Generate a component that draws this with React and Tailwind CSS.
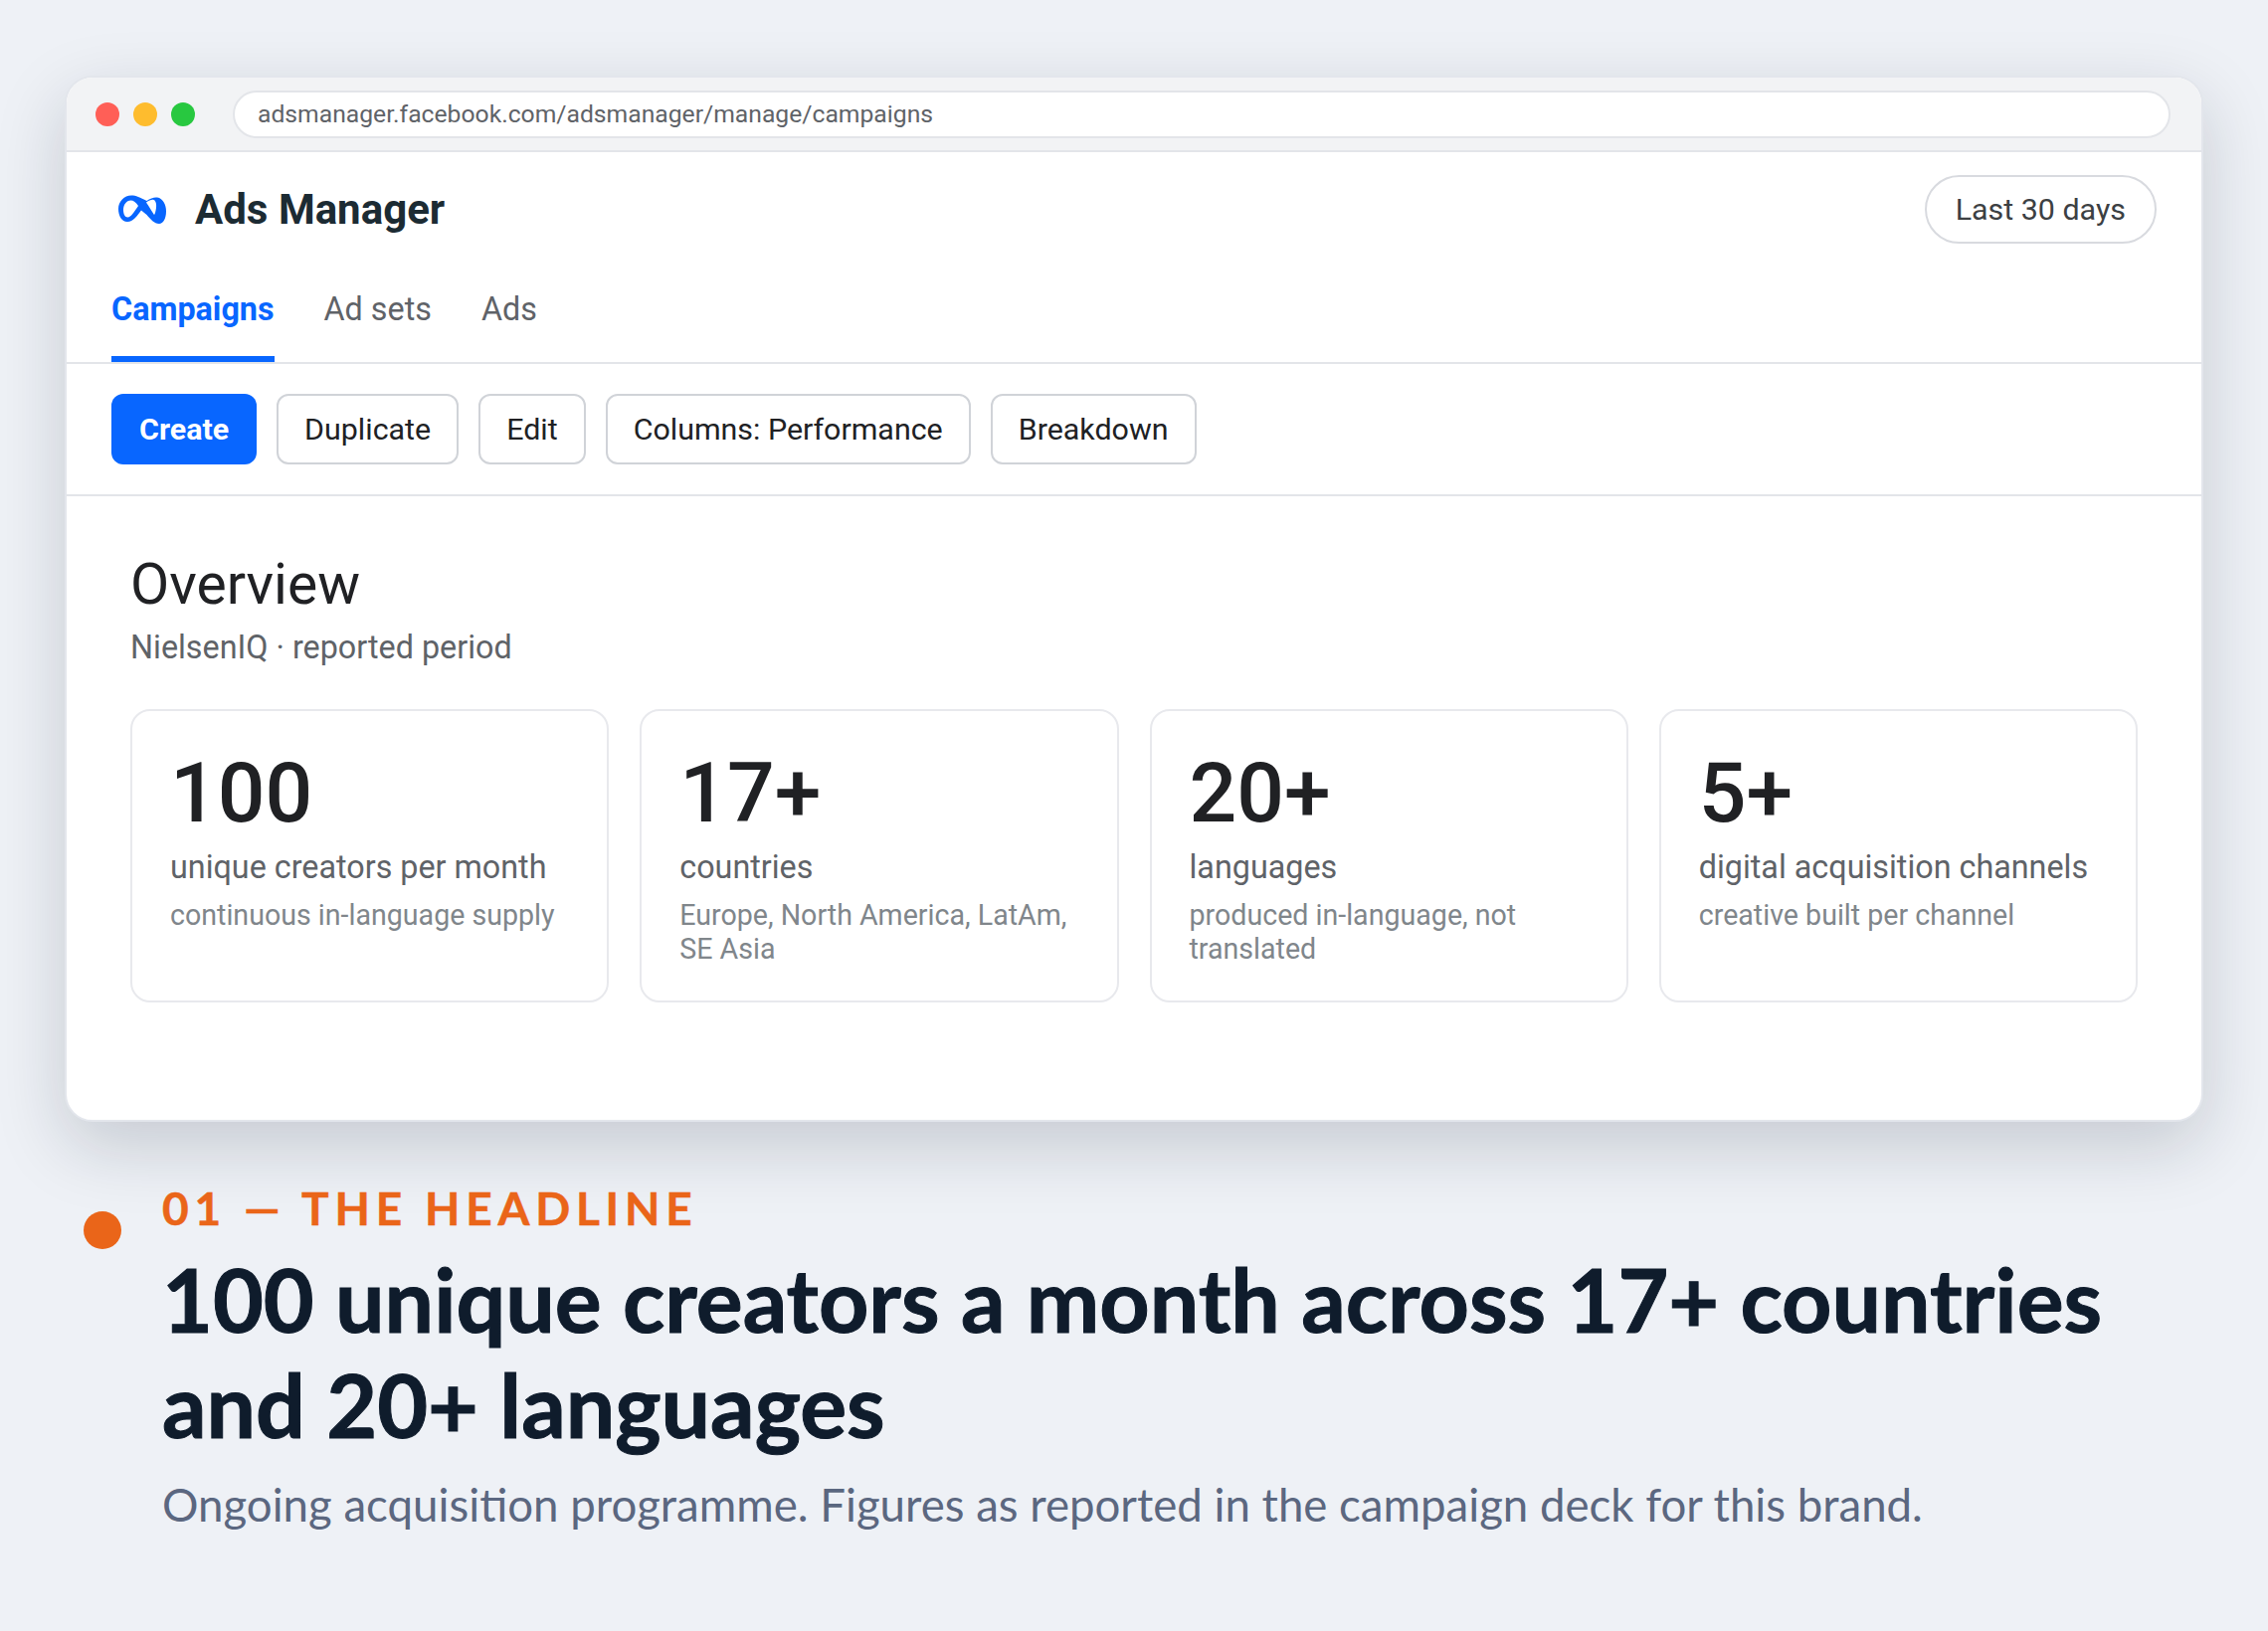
const cards = [
  { n: "100", l: "unique creators per month", s: "continuous in-language supply" },
  { n: "17+", l: "countries", s: "Europe, North America, LatAm, SE Asia" },
  { n: "20+", l: "languages", s: "produced in-language, not translated" },
  { n: "5+", l: "digital acquisition channels", s: "creative built per channel" },
];

function MetaLogo() {
  return (
    <svg width="48" height="30" viewBox="0 0 48 30" className="block">
      <path
        fill="#0866ff"
        fillRule="evenodd"
        d="M13 .5C17.5 .5 22 2.5 28.5 6C32 3.5 36 2 39 2.5C45 3.5 48 10 48 16.5C48 24 45 29 41 29C36 29 32.5 24.5 28.5 20L23 15.5C19 21 15 27 9 27C3.5 27 0 21 0 14C0 6.5 6 .5 13 .5ZM12.5 5.5C8 5.5 5 10 5 15C5 19 6.5 22.5 9.5 22.5C12.5 22.5 16 17 20 11C18 7.5 15 5.5 12.5 5.5ZM28 7.5C31 5.5 33.5 4.5 35.5 5C37.5 5.5 38.5 9 38 13C37.5 16 37 19 36 20C34 17 30.5 11 28 7.5Z"
      />
    </svg>
  );
}

function Btn({ children }) {
  return (
    <div className="h-[71px] flex items-center px-[26px] rounded-[12px] border-2 border-[#d0d3d8] bg-white text-[30.4px] text-[#202124]">
      {children}
    </div>
  );
}

export default function App() {
  return (
    <div className="w-[2280px] h-[1640px] bg-[#eef1f6] pt-[76px] px-[65px] font-[Roboto,sans-serif]">
      <div className="h-[1052px] rounded-[28px] border-2 border-[#e3e6ec] bg-white overflow-hidden shadow-[0_24px_70px_rgba(15,28,46,0.18)]">
        <div className="h-[75px] bg-[#f2f3f5] border-b-2 border-[#e3e5e9] flex items-center pl-[29px] pr-[31px]">
          <div className="flex gap-[14px]">
            <div className="w-[24px] h-[24px] rounded-full bg-[#ff5f57]" />
            <div className="w-[24px] h-[24px] rounded-full bg-[#febc2e]" />
            <div className="w-[24px] h-[24px] rounded-full bg-[#28c840]" />
          </div>
          <div className="ml-[38px] flex-1 h-[48px] rounded-full border-2 border-[#e3e5e9] bg-white flex items-center pl-[23px] text-[24.7px] text-[#5f6368]">
            adsmanager.facebook.com/adsmanager/manage/campaigns
          </div>
        </div>
        <div className="h-[213px] border-b-2 border-[#e3e5e9] flex flex-col">
          <div className="h-[116px] pl-[52px] pr-[45px] pt-[23px] flex items-start justify-between">
            <div className="flex items-center h-[69px] gap-[29px]">
              <MetaLogo />
              <span className="text-[42px] font-bold text-[#1c2b33]">Ads Manager</span>
            </div>
            <div className="h-[69px] flex items-center px-[29px] rounded-full border-2 border-[#d8dadf] text-[30.4px] text-[#3c4043]">Last 30 days</div>
          </div>
          <div className="flex-1 flex gap-[50px] pl-[45px] text-[32.3px] text-[#5f6368]">
            <div className="h-[95px] flex items-center pb-[5px] text-[#0866ff] font-bold border-b-[6px] border-[#0866ff]">Campaigns</div>
            <div className="h-[95px] flex items-center pb-[11px]">Ad sets</div>
            <div className="h-[95px] flex items-center pb-[11px]">Ads</div>
          </div>
        </div>
        <div className="h-[133px] border-b-2 border-[#e3e5e9] flex items-center gap-[20px] pl-[45px]">
          <div className="h-[71px] flex items-center px-[28px] rounded-[12px] bg-[#0866ff] text-white font-bold text-[30.4px]">Create</div>
          <Btn>Duplicate</Btn>
          <Btn>Edit</Btn>
          <Btn>Columns: Performance</Btn>
          <Btn>Breakdown</Btn>
        </div>
        <div className="px-[64px] pt-[55px]">
          <div className="text-[57px] leading-[68px] text-[#202124]">Overview</div>
          <div className="mt-[9px] text-[32.3px] leading-[40px] text-[#5f6368]">NielsenIQ · reported period</div>
          <div className="mt-[42px] grid grid-cols-4 gap-[31px]">
            {cards.map((c) => (
              <div key={c.n} className="h-[295px] rounded-[20px] border-2 border-[#e8e9ed] px-[38px] pt-[34px]">
                <div className="text-[84px] leading-[98px] font-medium text-[#202124]">{c.n}</div>
                <div className="mt-[5px] text-[32.3px] leading-[40px] text-[#5f6368]">{c.l}</div>
                <div className="mt-[11px] text-[28.6px] leading-[34px] text-[#80868b]">{c.s}</div>
              </div>
            ))}
          </div>
        </div>
      </div>
      <div className="relative pl-[98px] font-[Lato,sans-serif]">
        <div className="absolute left-[19px] top-[90px] w-[38px] h-[38px] rounded-full bg-[#ea6519]" />
        <div className="pt-[59px] text-[46px] leading-[56px] font-bold tracking-[5.8px] text-[#ea6519] [-webkit-text-stroke:0.5px_#ea6519]">01 — THE HEADLINE</div>
        <div className="mt-[10px] text-[87.8px] leading-[106px] font-bold text-[#0f1c2c] [-webkit-text-stroke:1px_#0f1c2c]">100 unique creators a month across 17+ countries and 20+ languages</div>
        <div className="mt-[18px] text-[45.6px] leading-[60px] text-[#5b6780]">Ongoing acquisition programme. Figures as reported in the campaign deck for this brand.</div>
      </div>
    </div>
  );
}
